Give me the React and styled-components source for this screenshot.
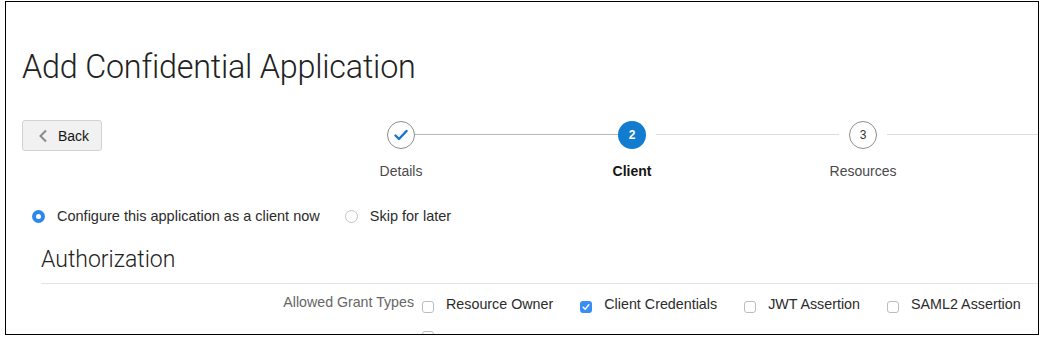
import React from "react";
import styled, { createGlobalStyle } from "styled-components";

const GlobalStyle = createGlobalStyle`
  html, body {
    margin: 0;
    padding: 0;
    background: #fff;
  }
  body {
    font-family: "Liberation Sans", Arial, sans-serif;
    color: #333;
  }
`;

const steps = [
  { label: "Details", state: "done" },
  { label: "Client", state: "active" },
  { label: "Resources", state: "todo", num: 3 },
];

const grantTypes = [
  { label: "Resource Owner", checked: false },
  { label: "Client Credentials", checked: true },
  { label: "JWT Assertion", checked: false },
  { label: "SAML2 Assertion", checked: false },
];

export default function App() {
  return (
    <>
      <GlobalStyle />
      <Frame>
        <Title>Add Confidential Application</Title>

        <TopRow>
          <BackButton>
            <svg width="10" height="14" viewBox="0 0 10 14">
              <path
                d="M8 1.5 L2.5 7 L8 12.5"
                fill="none"
                stroke="#8a8a8a"
                strokeWidth="2"
              />
            </svg>
            Back
          </BackButton>

          <Stepper>
            <Step>
              <Circle $state="done">
                <svg width="14" height="12" viewBox="0 0 14 12">
                  <path
                    d="M1.5 6.5 L5 10 L12.5 2"
                    fill="none"
                    stroke="#1a73d1"
                    strokeWidth="2.4"
                    strokeLinecap="round"
                    strokeLinejoin="round"
                  />
                </svg>
              </Circle>
              <StepLabel>{steps[0].label}</StepLabel>
            </Step>
            <Connector $done />
            <Step>
              <Circle $state="active">2</Circle>
              <StepLabel $active>{steps[1].label}</StepLabel>
            </Step>
            <Connector $gap />
            <Step>
              <Circle $state="todo">{steps[2].num}</Circle>
              <StepLabel>{steps[2].label}</StepLabel>
            </Step>
            <Connector $gap $last />
          </Stepper>
        </TopRow>

        <RadioRow>
          <RadioOption>
            <Radio $checked />
            Configure this application as a client now
          </RadioOption>
          <RadioOption>
            <Radio />
            Skip for later
          </RadioOption>
        </RadioRow>

        <Section>
          <SectionTitle>Authorization</SectionTitle>
          <Divider />
          <FieldRow>
            <FieldLabel>Allowed Grant Types</FieldLabel>
            <Options>
              {grantTypes.map((g) => (
                <CheckOption key={g.label}>
                  <Checkbox $checked={g.checked}>
                    {g.checked && (
                      <svg width="8" height="8" viewBox="0 0 8 8">
                        <path
                          d="M1.2 4.2 L3.2 6.2 L6.8 1.8"
                          fill="none"
                          stroke="#fff"
                          strokeWidth="1.5"
                          strokeLinecap="round"
                          strokeLinejoin="round"
                        />
                      </svg>
                    )}
                  </Checkbox>
                  {g.label}
                </CheckOption>
              ))}
            </Options>
          </FieldRow>
          <FieldRow $next>
            <FieldLabel />
            <Options>
              <CheckOption>
                <Checkbox />
              </CheckOption>
            </Options>
          </FieldRow>
        </Section>
      </Frame>
    </>
  );
}

/* ---------------- Styled Components ---------------- */

const Frame = styled.div`
  box-sizing: border-box;
  margin: 1px 0 0 5px;
  width: 1034px;
  height: 334px;
  border: 1.5px solid #000;
  overflow: hidden;
  padding: 0 0 0 16px;
`;

const Title = styled.h1`
  margin: 45px 0 0;
  font-family: Roboto, "Liberation Sans", sans-serif;
  font-weight: 300;
  font-size: 32.3px;
  line-height: 40px;
  color: #222;
  letter-spacing: -0.2px;
`;

const TopRow = styled.div`
  display: flex;
  align-items: flex-start;
  margin-top: 33px;
`;

const BackButton = styled.button`
  box-sizing: border-box;
  display: flex;
  align-items: center;
  gap: 10px;
  width: 80px;
  height: 31px;
  padding: 0 0 0 15px;
  background: #f1f1f1;
  border: 1px solid #d2d2d2;
  border-radius: 3px;
  font-family: "Liberation Sans", Arial, sans-serif;
  font-size: 14px;
  color: #161513;
  cursor: pointer;
`;

const Stepper = styled.div`
  flex: 1;
  display: flex;
  align-items: flex-start;
  margin-left: 285px;
`;

const Step = styled.div`
  width: 28px;
  display: flex;
  flex-direction: column;
  align-items: center;
`;

const Circle = styled.div`
  box-sizing: border-box;
  width: 28px;
  height: 28px;
  margin-top: 1px;
  border-radius: 50%;
  display: flex;
  align-items: center;
  justify-content: center;
  font-size: 12px;
  font-weight: ${(p) => (p.$state === "active" ? 700 : 400)};
  color: ${(p) => (p.$state === "active" ? "#fff" : "#333")};
  background: ${(p) => (p.$state === "active" ? "#127cd0" : "#fff")};
  border: ${(p) =>
    p.$state === "active" ? "none" : "1.5px solid #8d8d8d"};
`;

const StepLabel = styled.div`
  margin-top: 14px;
  white-space: nowrap;
  font-size: 14px;
  line-height: 17px;
  color: ${(p) => (p.$active ? "#161513" : "#4a4a4a")};
  font-weight: ${(p) => (p.$active ? 700 : 400)};
`;

const Connector = styled.div`
  height: 1px;
  margin-top: 14px;
  background: ${(p) => (p.$done ? "#b9b9b9" : "#dedede")};
  ${(p) => (p.$last ? "flex: 1;" : `width: ${p.$gap ? 183 : 203}px;`)}
  margin-left: ${(p) => (p.$gap ? 10 : 0)}px;
  margin-right: ${(p) => (p.$gap && !p.$last ? 10 : 0)}px;
`;

const RadioRow = styled.div`
  display: flex;
  align-items: center;
  gap: 25px;
  margin: 28px 0 0 10px;
`;

const RadioOption = styled.label`
  display: flex;
  align-items: center;
  gap: 12px;
  font-size: 14.5px;
  line-height: 17px;
  color: #2b2b2b;
`;

const Radio = styled.span`
  box-sizing: border-box;
  width: 13px;
  height: 13px;
  border-radius: 50%;
  background: ${(p) => (p.$checked ? "#2f86ef" : "#fff")};
  border: ${(p) => (p.$checked ? "none" : "1px solid #c4c4c4")};
  display: flex;
  align-items: center;
  justify-content: center;

  &::after {
    content: "";
    width: 5px;
    height: 5px;
    border-radius: 50%;
    background: #fff;
    display: ${(p) => (p.$checked ? "block" : "none")};
  }
`;

const Section = styled.div`
  margin: 21px 0 0 19px;
`;

const SectionTitle = styled.h2`
  margin: 0;
  font-family: Roboto, "Liberation Sans", sans-serif;
  font-weight: 300;
  font-size: 23px;
  line-height: 28px;
  color: #222;
`;

const Divider = styled.div`
  height: 1px;
  margin-top: 9px;
  background: #e4e4e4;
`;

const FieldRow = styled.div`
  display: flex;
  align-items: flex-start;
  margin-top: ${(p) => (p.$next ? 12 : 10)}px;
`;

const FieldLabel = styled.div`
  box-sizing: border-box;
  width: 381px;
  padding-right: 8px;
  text-align: right;
  font-size: 14.2px;
  line-height: 16px;
  color: #666;
`;

const Options = styled.div`
  display: flex;
  gap: 27px;
  padding-top: 2px;
`;

const CheckOption = styled.label`
  display: flex;
  align-items: center;
  gap: 12px;
  font-size: 14.3px;
  line-height: 17px;
  color: #2b2b2b;
`;

const Checkbox = styled.span`
  box-sizing: border-box;
  width: 12px;
  height: 12px;
  margin-top: 4px;
  border-radius: 3px;
  background: ${(p) => (p.$checked ? "#3a8df5" : "#fff")};
  border: ${(p) => (p.$checked ? "none" : "1px solid #bdbdbd")};
  display: flex;
  align-items: center;
  justify-content: center;
`;
